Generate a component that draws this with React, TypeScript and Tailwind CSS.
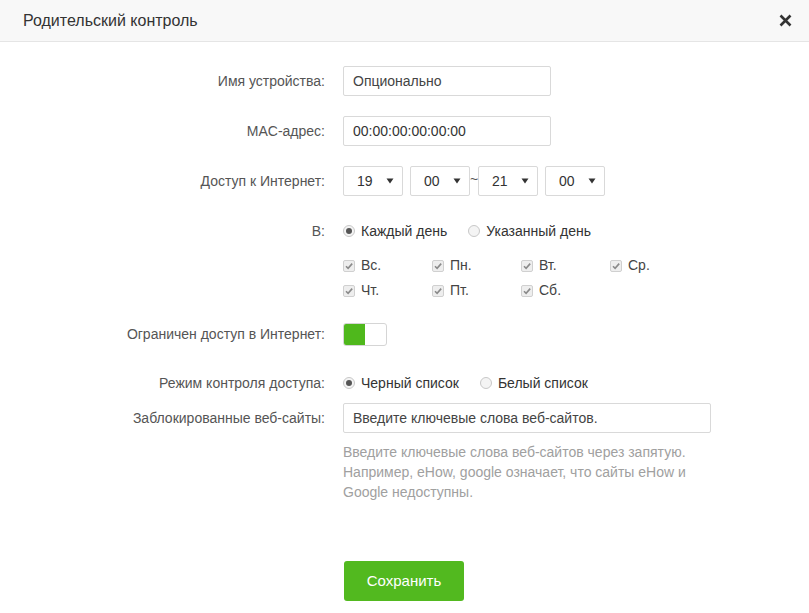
import React from 'react'

const font = { fontFamily: '"Liberation Sans", Arial, sans-serif' }

function Label({ children }: { children: React.ReactNode }) {
  return <div className="w-[325px] shrink-0 text-right text-[14px] text-[#555]">{children}</div>
}

function Radio({ checked, label }: { checked?: boolean; label: string }) {
  return (
    <label className="flex items-center gap-[6px] text-[14px] text-[#333]">
      <span className="w-[12px] h-[12px] rounded-full border border-[#c8c8c8] bg-[#f4f4f4] flex items-center justify-center">
        {checked && <span className="w-[6px] h-[6px] rounded-full bg-[#555]" />}
      </span>
      {label}
    </label>
  )
}

function Check({ label }: { label: string }) {
  return (
    <div className="w-[89px] flex items-center gap-[6px] text-[14px] text-[#444]">
      <span className="w-[12px] h-[12px] border border-[#d0d0d0] bg-[#eee] rounded-[2px] flex items-center justify-center">
        <svg width="10" height="10" viewBox="0 0 10 10">
          <path d="M2 5.2 L4.1 7.3 L8.2 2.6" fill="none" stroke="#8a8a8a" strokeWidth="1.6" />
        </svg>
      </span>
      {label}
    </div>
  )
}

function Select({ value }: { value: string }) {
  return (
    <div className="w-[60px] h-[30px] border border-[#d9d9d9] rounded-[2px] bg-white flex items-center justify-between pl-[13px] pr-[8px] text-[14px] text-[#333]">
      <span>{value}</span>
      <svg width="8" height="6" viewBox="0 0 8 6">
        <path d="M0.5 0.5 L7.5 0.5 L4 5.5 Z" fill="#333" />
      </svg>
    </div>
  )
}

export default function App() {
  const days1 = ['Вс.', 'Пн.', 'Вт.', 'Ср.']
  const days2 = ['Чт.', 'Пт.', 'Сб.']

  return (
    <div className="w-[809px] h-[613px] bg-white overflow-hidden" style={font}>
      {/* шапка */}
      <div className="h-[42px] bg-[#f8f8f8] border-b border-[#e5e5e5] flex items-center justify-between pl-[23px] pr-[17px]">
        <span className="text-[16px] text-[#333]">Родительский контроль</span>
        <svg width="13" height="13" viewBox="0 0 13 13">
          <path d="M1.5 1.5 L11.5 11.5 M11.5 1.5 L1.5 11.5" stroke="#333" strokeWidth="2.6" />
        </svg>
      </div>

      <div className="pt-[24px]">
        <div className="flex items-center gap-[18px] h-[30px]">
          <Label>Имя устройства:</Label>
          <div className="w-[208px] h-[30px] border border-[#d9d9d9] rounded-[2px] flex items-center px-[9px] text-[14px] text-[#444]">
            Опционально
          </div>
        </div>

        <div className="flex items-center gap-[18px] h-[30px] mt-[20px]">
          <Label>MAC-адрес:</Label>
          <div className="w-[208px] h-[30px] border border-[#d9d9d9] rounded-[2px] flex items-center px-[9px] text-[14px] text-[#333]">
            00:00:00:00:00:00
          </div>
        </div>

        <div className="flex items-center gap-[18px] h-[30px] mt-[20px]">
          <Label>Доступ к Интернет:</Label>
          <div className="flex items-center">
            <Select value="19" />
            <div className="w-[7px]" />
            <Select value="00" />
            <span className="w-[8px] text-center text-[14px] text-[#555] -mt-[4px]">~</span>
            <Select value="21" />
            <div className="w-[7px]" />
            <Select value="00" />
          </div>
        </div>

        <div className="flex items-center gap-[18px] h-[30px] mt-[20px]">
          <Label>В:</Label>
          <div className="flex items-center gap-[21px]">
            <Radio checked label="Каждый день" />
            <Radio label="Указанный день" />
          </div>
        </div>

        <div className="ml-[343px] mt-[7px]">
          <div className="flex items-center h-[25px]">
            {days1.map((d) => (
              <Check key={d} label={d} />
            ))}
          </div>
          <div className="flex items-center h-[25px]">
            {days2.map((d) => (
              <Check key={d} label={d} />
            ))}
          </div>
        </div>

        <div className="flex items-center gap-[18px] h-[23px] mt-[20px]">
          <Label>Ограничен доступ в Интернет:</Label>
          <div className="w-[44px] h-[23px] border border-[#d5d5d5] rounded-[3px] flex overflow-hidden bg-white">
            <div className="w-[21px] h-full bg-[#4fb81c]" />
          </div>
        </div>

        <div className="flex items-center gap-[18px] h-[30px] mt-[22px]">
          <Label>Режим контроля доступа:</Label>
          <div className="flex items-center gap-[21px]">
            <Radio checked label="Черный список" />
            <Radio label="Белый список" />
          </div>
        </div>

        <div className="flex items-center gap-[18px] h-[30px] mt-[5px]">
          <Label>Заблокированные веб-сайты:</Label>
          <div className="w-[368px] h-[30px] border border-[#d9d9d9] rounded-[2px] flex items-center px-[9px] text-[14px] text-[#444]">
            Введите ключевые слова веб-сайтов.
          </div>
        </div>

        <div className="ml-[343px] mt-[9px] w-[370px] text-[14px] leading-[20px] text-[#a0a0a0]">
          Введите ключевые слова веб-сайтов через запятую.
          <br />
          Например, eHow, google означает, что сайты eHow и
          <br />
          Google недоступны.
        </div>

        <div className="ml-[344px] mt-[59px]">
          <button className="w-[120px] h-[40px] rounded-[3px] bg-[#52b91f] text-white text-[15px]">
            Сохранить
          </button>
        </div>
      </div>
    </div>
  )
}
